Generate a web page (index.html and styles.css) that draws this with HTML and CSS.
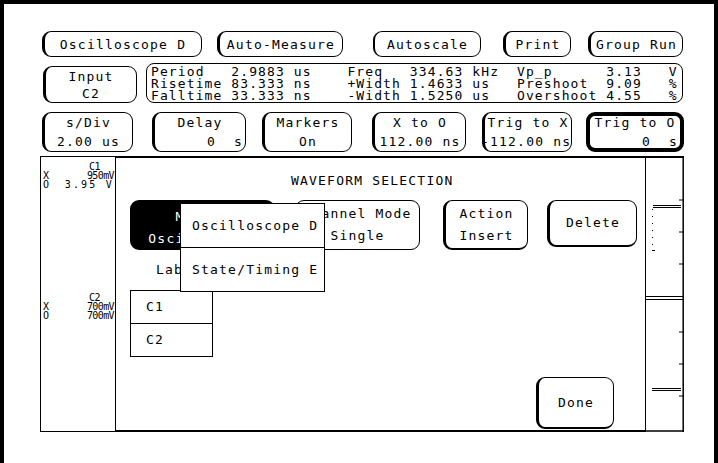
FILE: index.html
```html
<!DOCTYPE html>
<html lang="en">
<head>
    <meta charset="UTF-8">
    <meta name="viewport" content="width=device-width, initial-scale=1.0">
    <title>Waveform Selection</title>
    <link rel="stylesheet" href="styles.css">
</head>
<body>
<div class="screen">
    <div class="row row-top">
        <div class="key k-osc">Oscilloscope D</div>
        <div class="key k-auto">Auto-Measure</div>
        <div class="key k-scale">Autoscale</div>
        <div class="key k-print">Print</div>
        <div class="key k-group">Group Run</div>
    </div>

    <div class="row row-meas">
        <div class="key k-input"><span>Input</span><span>C2</span></div>
        <div class="meas">
            <div class="meas-line">Period   2.9883 us    Freq   334.63 kHz  Vp_p      3.13   V</div>
            <div class="meas-line">Risetime 83.333 ns    +Width 1.4633 us   Preshoot  9.09   %</div>
            <div class="meas-line">Falltime 33.333 ns    -Width 1.5250 us   Overshoot 4.55   %</div>
        </div>
    </div>

    <div class="row row-time">
        <div class="key k-div"><span>s/Div</span><span>2.00 us</span></div>
        <div class="key k-delay"><span>Delay</span><span class="right">0  s</span></div>
        <div class="key k-markers"><span>Markers</span><span>On</span></div>
        <div class="key k-xo"><span>X to O</span><span>112.00 ns</span></div>
        <div class="key k-tx"><span>Trig to X</span><span class="left">-112.00 ns</span></div>
        <div class="key k-to"><span>Trig to O</span><span class="right">0  s</span></div>
    </div>

    <div class="lower">
        <div class="labels">
            <div class="chan">
                <div class="chan-name">C1</div>
                <div class="chan-line"><span>X</span><span class="narrow">950mV</span></div>
                <div class="chan-line"><span>O</span><span class="spaced">3.95 V</span></div>
            </div>
            <div class="chan chan-2">
                <div class="chan-name">C2</div>
                <div class="chan-line"><span>X</span><span class="narrow">700mV</span></div>
                <div class="chan-line"><span>O</span><span class="narrow">700mV</span></div>
            </div>
        </div>

        <div class="dialog">
            <div class="dialog-title">WAVEFORM SELECTION</div>
            <div class="dialog-keys">
                <div class="key k-module"><span>Module</span><span>Oscilloscope</span></div>
                <div class="key k-channel"><span>Channel Mode</span><span>Single</span></div>
                <div class="key k-action"><span>Action</span><span>Insert</span></div>
                <div class="key k-delete">Delete</div>
            </div>
            <div class="label-title">Label</div>
            <div class="label-table">
                <div class="label-cell">C1</div>
                <div class="label-cell">C2</div>
            </div>
            <div class="done-row">
                <div class="key k-done">Done</div>
            </div>

            <div class="menu">
                <div class="menu-item">Oscilloscope D</div>
                <div class="menu-item">State/Timing E</div>
            </div>
        </div>

        <div class="trace">
            <svg width="38" height="276" viewBox="0 0 38 276">
                <g stroke="#000" fill="none">
                    <path d="M0 1h38" stroke-width="2"/>
                    <path d="M37.2 0v276" stroke-width="1.5"/>
                    <path d="M33 44h5M33 76h5M33 108h5M33 176h5M33 208h5M33 240h5" stroke-width="1.2"/>
                    <path d="M0 140.5h38M0 143.5h38" stroke-width="1.2"/>
                    <path d="M7 49.5h28M7 51.5h28" stroke-width="1.2"/>
                    <path d="M6.5 53v40" stroke-width="1" stroke-dasharray="1 6"/>
                    <path d="M6 94.5h3" stroke-width="1"/>
                    <path d="M6 232.5h29M6 234.5h29" stroke-width="1.2"/>
                    <path d="M0 275h38" stroke-width="1.5"/>
                </g>
            </svg>
        </div>
    </div>
</div>
</body>
</html>
```

FILE: styles.css
```css
body {
    margin: 0;
    background: #ffffff;
}
.screen {
    width: 718px;
    height: 463px;
    box-sizing: border-box;
    border: 4px solid #000;
    border-bottom: 0;
    padding: 27px 0 0 38px;
    font-family: 'DejaVu Sans Mono', monospace;
    font-size: 13px;
    letter-spacing: 1.2px;
    color: #000;
    overflow: hidden;
}
.row {
    display: flex;
}
.key {
    box-sizing: border-box;
    border: 1.5px solid #000;
    border-left-width: 3px;
    border-radius: 9px;
    background: #fff;
    display: flex;
    flex-direction: column;
    align-items: center;
    justify-content: center;
    white-space: pre;
    line-height: 17px;
}
.key .right {
    align-self: flex-end;
    padding-right: 2px;
}
.key .left {
    align-self: flex-start;
    margin-left: -4px;
}

/* top row */
.row-top {
    height: 26px;
}
.k-osc { width: 160px; }
.k-auto { width: 126px; margin-left: 15px; }
.k-scale { width: 108px; margin-left: 30px; border-left-width: 2px; }
.k-print { width: 68px; margin-left: 22px; }
.k-group { width: 95px; margin-left: 17px; }

/* measurement row */
.row-meas {
    margin-top: 6px;
    height: 40px;
}
.k-input {
    width: 94px;
    height: 37px;
    margin-left: 1px;
    align-self: flex-end;
}
.meas {
    box-sizing: border-box;
    width: 537px;
    height: 40px;
    margin-left: 9px;
    border: 1.5px solid #000;
    border-radius: 8px;
    padding: 2px 0 0 4px;
    line-height: 12px;
    letter-spacing: 1.1px;
}
.meas-line {
    white-space: pre;
}

/* time base row */
.row-time {
    margin-top: 9px;
    height: 40px;
}
.row-time .key {
    line-height: 19px;
}
.k-div { width: 91px; }
.k-delay { width: 94px; margin-left: 19px; }
.k-markers { width: 90px; margin-left: 16px; }
.k-xo { width: 94px; margin-left: 20px; }
.k-tx { width: 90px; margin-left: 16px; }
.k-to { width: 98px; margin-left: 14px; border-width: 4px; }

/* lower area */
.lower {
    display: flex;
    margin: 4px 0 0 -2px;
    height: 276px;
}
.labels {
    box-sizing: border-box;
    width: 75px;
    border: 1px solid #000;
    border-right: 0;
    padding: 5px 0 0 2px;
    font-size: 10px;
    letter-spacing: 0;
    line-height: 9px;
}
.chan-name {
    padding-left: 46px;
    letter-spacing: -0.4px;
}
.chan-line {
    display: flex;
    justify-content: space-between;
    padding-right: 1px;
    white-space: pre;
}
.narrow {
    letter-spacing: -0.6px;
}
.spaced {
    letter-spacing: 2.2px;
}
.chan-2 {
    margin-top: 104px;
}

.dialog {
    position: relative;
    box-sizing: border-box;
    width: 531px;
    border: 1.5px solid #000;
    border-top-width: 2px;
    border-bottom-width: 2px;
    padding: 0 0 0 14px;
}
.dialog-title {
    margin: 15px 0 0 161px;
    line-height: 16px;
}
.dialog-keys {
    display: flex;
    align-items: flex-start;
    margin-top: 11px;
}
.dialog-keys .key {
    line-height: 22px;
}
.k-module {
    width: 145px;
    height: 50px;
    background: #000;
    color: #fff;
    border-width: 2px;
    padding-top: 5px;
}
.k-channel { width: 125px; height: 50px; margin-left: 20px; border-left-width: 1.5px; }
.k-action { width: 85px; height: 50px; margin-left: 23px; border-bottom-width: 2.5px; }
.k-delete { width: 90px; height: 47px; margin-left: 19px; border-bottom-width: 2.5px; }
.label-title {
    margin: 12px 0 0 26px;
    line-height: 16px;
}
.label-table {
    box-sizing: border-box;
    width: 83px;
    margin-top: 12px;
    border: 1px solid #000;
}
.label-cell {
    height: 32px;
    line-height: 32px;
    padding-left: 15px;
}
.label-cell + .label-cell {
    border-top: 1px solid #000;
}
.done-row {
    display: flex;
    justify-content: flex-end;
    margin: 20px 31px 0 0;
}
.k-done {
    width: 78px;
    height: 52px;
    border-bottom-width: 2.5px;
}

.menu {
    position: absolute;
    left: 64px;
    top: 45px;
    width: 145px;
    background: #fff;
    border: 1.5px solid #000;
    box-sizing: border-box;
}
.menu-item {
    height: 43px;
    line-height: 43px;
    padding-left: 11px;
}
.menu-item + .menu-item {
    border-top: 1.5px solid #000;
}

.trace {
    width: 38px;
}
.trace svg {
    display: block;
}
```
